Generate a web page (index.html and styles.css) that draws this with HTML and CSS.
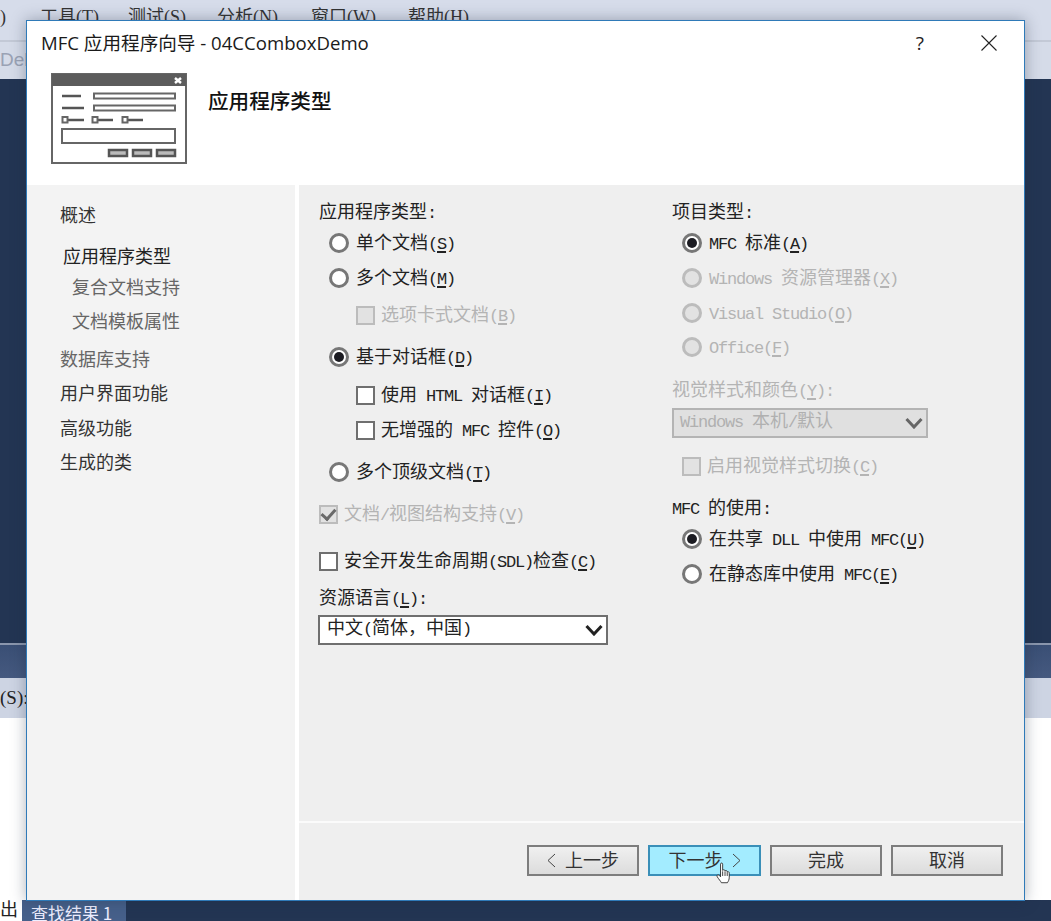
FILE: index.html
```html
<!DOCTYPE html>
<html lang="zh-CN">
<head>
    <meta charset="UTF-8">
    <meta name="viewport" content="width=device-width, initial-scale=1.0">
    <title>MFC 应用程序向导</title>
    <link rel="stylesheet" href="styles.css">
</head>
<body>
    <!-- IDE behind the dialog -->
    <div class="ide">
        <div class="menubar">
            <span class="menu-cut">)</span>
            <span class="menu-a">工具(T)</span>
            <span class="menu-b">测试(S)</span>
            <span class="menu-c">分析(N)</span>
            <span class="menu-d">窗口(W)</span>
            <span class="menu-e">帮助(H)</span>
        </div>
        <div class="toolbar">Del</div>
        <div class="editor"></div>
        <div class="panel-title"></div>
        <div class="panel-search">(S):</div>
        <div class="panel-body"></div>
        <div class="tabs">
            <span class="tabs-cut">出</span>
            <div class="tabs-strip"><span class="tab">查找结果 1</span></div>
        </div>
    </div>

    <!-- Wizard Dialog -->
    <div class="dialog">
        <div class="dialog-head">
            <div class="titlebar">
                <span class="title">MFC 应用程序向导 - 04CComboxDemo</span>
                <span class="help">?</span>
                <svg class="close" viewBox="0 0 16 16"><path d="M0.5 0.5L15.5 15.5M15.5 0.5L0.5 15.5"></path></svg>
            </div>
            <div class="banner">
                <svg class="wizard-icon" viewBox="0 0 136 91">
                    <rect x="1" y="1" width="134" height="89" fill="#fff" stroke="#666" stroke-width="2"></rect>
                    <rect x="1" y="1" width="134" height="12" fill="#5c5c5c"></rect>
                    <path d="M124 5L130 10M130 5L124 10" stroke="#fff" stroke-width="2.5"></path>
                    <path d="M11 23H30M11 35H33M16 47H33M46 47H62M76 47H92" stroke="#555" stroke-width="2.5"></path>
                    <rect x="43" y="20.5" width="81" height="5" fill="#fff" stroke="#666" stroke-width="2"></rect>
                    <rect x="43" y="32.5" width="81" height="5" fill="#fff" stroke="#666" stroke-width="2"></rect>
                    <rect x="11.5" y="44" width="5" height="5.5" fill="#fff" stroke="#666" stroke-width="2"></rect>
                    <rect x="41.5" y="44" width="5" height="5.5" fill="#fff" stroke="#666" stroke-width="2"></rect>
                    <rect x="71.5" y="44" width="5" height="5.5" fill="#fff" stroke="#666" stroke-width="2"></rect>
                    <rect x="11" y="56" width="113" height="14" fill="#fff" stroke="#666" stroke-width="2"></rect>
                    <rect x="58" y="77" width="18" height="6" fill="#bbb" stroke="#555" stroke-width="2.5"></rect>
                    <rect x="82" y="77" width="18" height="6" fill="#bbb" stroke="#555" stroke-width="2.5"></rect>
                    <rect x="106" y="77" width="18" height="6" fill="#bbb" stroke="#555" stroke-width="2.5"></rect>
                </svg>
                <h1>应用程序类型</h1>
            </div>
        </div>

        <div class="dialog-body">
            <nav class="steps">
                <div class="step step-top">概述</div>
                <div class="step step-current">应用程序类型</div>
                <div class="step step-sub">复合文档支持</div>
                <div class="step step-sub step-sub2">文档模板属性</div>
                <div class="step step-off">数据库支持</div>
                <div class="step step-ui">用户界面功能</div>
                <div class="step step-next">高级功能</div>
                <div class="step step-last">生成的类</div>
            </nav>

            <div class="page">
                <div class="options">
                    <div class="col col-left">
                        <div class="row"><span>应用程序类型<i class="m">:</i></span></div>
                        <div class="row in1 mt31"><b class="radio"></b><span>单个文档<i class="m">(<u>S</u>)</i></span></div>
                        <div class="row in1 mt35"><b class="radio"></b><span>多个文档<i class="m">(<u>M</u>)</i></span></div>
                        <div class="row in2 mt37 off"><b class="check"></b><span>选项卡式文档<i class="m">(<u>B</u>)</i></span></div>
                        <div class="row in1 mt42"><b class="radio on"></b><span>基于对话框<i class="m">(<u>D</u>)</i></span></div>
                        <div class="row in2 mt38"><b class="check"></b><span>使用<i class="m"> HTML </i>对话框<i class="m">(<u>I</u>)</i></span></div>
                        <div class="row in2 mt35"><b class="check"></b><span>无增强的<i class="m"> MFC </i>控件<i class="m">(<u>O</u>)</i></span></div>
                        <div class="row in1 mt42"><b class="radio"></b><span>多个顶级文档<i class="m">(<u>T</u>)</i></span></div>
                        <div class="row mt42 off"><b class="check on"></b><span>文档<i class="m">/</i>视图结构支持<i class="m">(<u>V</u>)</i></span></div>
                        <div class="row mt47"><b class="check"></b><span>安全开发生命周期<i class="m">(SDL)</i>检查<i class="m">(<u>C</u>)</i></span></div>
                        <div class="row mt37"><span>资源语言<i class="m">(<u>L</u>):</i></span></div>
                        <div class="select select-lang">
                            <span>中文<i class="m">(</i>简体，中国<i class="m">)</i></span>
                            <svg viewBox="0 0 18 12"><path d="M1.5 2L9 10L16.5 2"></path></svg>
                        </div>
                    </div>

                    <div class="col col-right">
                        <div class="row"><span>项目类型<i class="m">:</i></span></div>
                        <div class="row in1 mt31"><b class="radio on"></b><span><i class="m">MFC </i>标准<i class="m">(<u>A</u>)</i></span></div>
                        <div class="row in1 mt35 off"><b class="radio"></b><span><i class="m">Windows </i>资源管理器<i class="m">(<u>X</u>)</i></span></div>
                        <div class="row in1 mt35 off"><b class="radio"></b><span><i class="m">Visual Studio(<u>O</u>)</i></span></div>
                        <div class="row in1 mt34 off"><b class="radio"></b><span><i class="m">Office(<u>F</u>)</i></span></div>
                        <div class="row mt43 off"><span>视觉样式和颜色<i class="m">(<u>Y</u>):</i></span></div>
                        <div class="select select-style">
                            <span><i class="m">Windows </i>本机<i class="m">/</i>默认</span>
                            <svg viewBox="0 0 18 12"><path d="M1.5 2L9 10L16.5 2"></path></svg>
                        </div>
                        <div class="row in1 mt-after off"><b class="check"></b><span>启用视觉样式切换<i class="m">(<u>C</u>)</i></span></div>
                        <div class="row mt42"><span><i class="m">MFC </i>的使用<i class="m">:</i></span></div>
                        <div class="row in1 mt31"><b class="radio on"></b><span>在共享<i class="m"> DLL </i>中使用<i class="m"> MFC(<u>U</u>)</i></span></div>
                        <div class="row in1 mt35"><b class="radio"></b><span>在静态库中使用<i class="m"> MFC(<u>E</u>)</i></span></div>
                    </div>
                </div>

                <div class="actions">
                    <div class="btn">
                        <svg class="chevron chevron-back" viewBox="0 0 9 15"><path d="M8 1L1 7.5L8 14"></path></svg>
                        <span>上一步</span>
                    </div>
                    <div class="btn btn-hover">
                        <span>下一步</span>
                        <svg class="chevron chevron-next" viewBox="0 0 9 15"><path d="M1 1L8 7.5L1 14"></path></svg>
                        <svg class="hand" viewBox="0 0 18 26">
                            <path d="M5.5 2.5C5.5 .8 8 .8 8 2.5V10C9 8.6 10.6 9 10.8 10.5C11.8 9.6 13.2 10 13.4 11.6C14.5 11 15.8 11.6 15.8 13.2V18C15.8 21 14.6 23 13.6 24.5H6.5C5.5 22.5 3.5 20.5 1.6 17.5C.6 15.8 2.2 14.3 3.7 15.6L5.5 17.5Z"></path>
                            <path d="M8 11V16.5M10.8 11V16.5M13.4 12V16.5"></path>
                        </svg>
                    </div>
                    <div class="btn"><span>完成</span></div>
                    <div class="btn"><span>取消</span></div>
                </div>
            </div>
        </div>
    </div>
</body>
</html>
```
FILE: styles.css
```css
/* Basic Reset */
* {
    margin: 0;
    padding: 0;
    box-sizing: border-box;
}

body {
    width: 1051px;
    height: 921px;
    overflow: hidden;
    position: relative;
    background: #fff;
    font-family: "Noto Sans CJK SC", "Liberation Sans", sans-serif;
    font-size: 18px;
    color: #222;
}

/* IDE Background */
.ide {
    height: 921px;
    display: flex;
    flex-direction: column;
    font-family: "Liberation Serif", "Noto Sans CJK SC", serif;
}

.menubar {
    height: 40px;
    background: #d6dcea;
    color: #333;
    position: relative;
}

.menubar span {
    position: absolute;
    top: 6px;
    line-height: 22px;
}

.menu-cut { left: 0; }
.menu-a { left: 40px; }
.menu-b { left: 128px; }
.menu-c { left: 217px; }
.menu-d { left: 311px; }
.menu-e { left: 408px; }

.toolbar {
    height: 39px;
    background: #d5dbe8;
    border-top: 2px solid #c3c9d6;
    color: #9aa2b4;
    line-height: 36px;
    font-size: 19px;
    font-family: "Liberation Sans", sans-serif;
}

.editor {
    height: 564px;
    background: #233553;
}

.panel-title {
    height: 35px;
    background: linear-gradient(#3a4f75, #45597f);
    border-top: 2px solid #8a96ad;
}

.panel-search {
    height: 40px;
    background: #cdd4e3;
    line-height: 40px;
    font-size: 19px;
    color: #222;
}

.panel-body {
    height: 182px;
    background: #fff;
}

.tabs {
    height: 21px;
    display: flex;
    background: #fff;
}

.tabs-cut {
    width: 22px;
    line-height: 21px;
    overflow: hidden;
    color: #222;
}

.tabs-strip {
    flex: 1;
    background: #233553;
}

.tab {
    display: block;
    width: 104px;
    height: 21px;
    padding-left: 9px;
    background: #46608a;
    color: #eef;
    line-height: 26px;
    font-family: "Noto Sans CJK SC", sans-serif;
    font-size: 17px;
}

/* Dialog */
.dialog {
    position: absolute;
    left: 26px;
    top: 20px;
    width: 999px;
    height: 881px;
    background: #fff;
    border: 1px solid #2f7ab8;
    box-shadow: 0 0 14px rgba(30, 40, 60, 0.35);
    display: flex;
    flex-direction: column;
}

.dialog-head {
    height: 164px;
    flex: none;
}

.titlebar {
    height: 44px;
    margin-bottom: 2px;
    display: flex;
    align-items: center;
    padding-left: 14px;
}

.title {
    flex: 1;
    padding-bottom: 4px;
    font-size: 18.6px;
    font-family: "Open Sans", "Noto Sans CJK SC", sans-serif;
    color: #1a1a1a;
}

.help {
    font-size: 19px;
    font-family: "Open Sans", sans-serif;
    margin-right: 57px;
}

.close {
    width: 16px;
    height: 16px;
    margin-right: 27px;
}

.close path {
    stroke: #222;
    stroke-width: 1.1;
    fill: none;
}

.banner {
    display: flex;
    align-items: flex-start;
    padding: 6px 0 0 24px;
}

.wizard-icon {
    width: 136px;
    height: 91px;
    flex: none;
}

h1 {
    font-size: 20.6px;
    font-weight: 500;
    line-height: 24px;
    margin: 15px 0 0 21px;
    color: #111;
}

.dialog-body {
    flex: 1;
    display: flex;
    background: #fff;
}

/* Step List */
.steps {
    width: 268px;
    flex: none;
    background: #f3f3f3;
    padding: 17px 0 0 33px;
    margin-right: 4px;
}

.step {
    line-height: 24px;
    height: 24px;
    color: #333;
}

.step-current { margin: 17px 0 0 3px; color: #222; }
.step-sub { margin: 7px 0 0 12px; color: #666; }
.step-sub2 { margin-top: 10px; }
.step-off { margin-top: 14px; color: #666; }
.step-ui { margin-top: 10px; }
.step-next { margin-top: 11px; }
.step-last { margin-top: 10px; }

/* Options Page */
.page {
    flex: 1;
    display: flex;
    flex-direction: column;
    background: #efefef;
}

.options {
    height: 638px;
    flex: none;
    display: flex;
    padding: 15px 0 0 20px;
    border-bottom: 2px solid #fbfbfb;
}

.col-left { width: 353px; flex: none; }
.col-right { flex: 1; }

.row {
    height: 24px;
    display: flex;
    align-items: center;
    white-space: pre;
    line-height: 24px;
}

/* Latin text sits at half the CJK advance */
.m {
    font-family: "Liberation Mono", monospace;
    font-size: 17px;
    letter-spacing: -1.2px;
    font-style: normal;
}

.m u {
    text-decoration-thickness: 2px;
    text-underline-offset: 2px;
}

.in1 { margin-left: 10px; }
.in2 { margin-left: 37px; }
.mt31 { margin-top: 7px; }
.mt34 { margin-top: 10px; }
.mt35 { margin-top: 11px; }
.mt37 { margin-top: 13px; }
.mt38 { margin-top: 14px; }
.mt42 { margin-top: 18px; }
.mt43 { margin-top: 19px; }
.mt47 { margin-top: 23px; }
.mt-after { margin-top: 16px; }

.off { color: #b4b4b4; }

.radio {
    width: 20px;
    height: 20px;
    flex: none;
    margin-right: 7px;
    border: 3px solid #777;
    border-radius: 50%;
    background: #fff;
    display: flex;
    align-items: center;
    justify-content: center;
}

.radio.on::after {
    content: "";
    width: 10px;
    height: 10px;
    border-radius: 50%;
    background: #1c1c22;
}

.check {
    width: 19px;
    height: 19px;
    flex: none;
    margin-right: 6px;
    border: 2px solid #6f6f6f;
    background: #fff;
    display: flex;
    align-items: center;
    justify-content: center;
}

.check.on::after {
    content: "";
    width: 6px;
    height: 11px;
    margin-top: -3px;
    border: solid #6a6a6a;
    border-width: 0 3px 3px 0;
    transform: rotate(42deg);
}

.off .radio,
.off .check {
    border-color: #bcbcbc;
    background: #e2e2e2;
}

.select {
    height: 30px;
    display: flex;
    align-items: center;
    justify-content: space-between;
    padding: 0 3px 0 7px;
    border: 2px solid #6f6f6f;
    background: #fff;
    white-space: pre;
}

.select span {
    padding-bottom: 8px;
}

.select svg {
    width: 18px;
    height: 12px;
    flex: none;
}

.select path {
    fill: none;
    stroke: #222;
    stroke-width: 3;
}

.select-lang {
    width: 290px;
    margin: 5px 0 0 -1px;
}

.select-style {
    width: 256px;
    margin-top: 6px;
    border-color: #b4b4b4;
    background: #e0e0e0;
    color: #b0b0b0;
    padding-left: 6px;
}

.select-style path {
    stroke: #666;
}

/* Footer Buttons */
.actions {
    flex: 1;
    display: flex;
    padding: 22px 0 0 228px;
    gap: 9px;
}

.btn {
    width: 112px;
    height: 31px;
    display: flex;
    align-items: center;
    justify-content: center;
    border: 2px solid #7d7d7d;
    background: linear-gradient(#f0f0f0, #dcdcdc);
    font-size: 18px;
    line-height: 24px;
    color: #333;
    position: relative;
}

.btn span {
    padding-bottom: 3px;
}

.btn-hover {
    width: 113px;
    border-color: #3a8fb8;
    background: #a3ecff;
}

.chevron {
    width: 9px;
    height: 15px;
    flex: none;
}

.chevron path {
    fill: none;
    stroke: #444;
    stroke-width: 1;
}

.chevron-back { margin-right: 9px; }
.chevron-next { margin-left: 9px; }

.hand {
    position: absolute;
    left: 65px;
    top: 15px;
    width: 17px;
    height: 22px;
}

.hand path {
    fill: #fff;
    stroke: #222;
    stroke-width: 1;
}
```
